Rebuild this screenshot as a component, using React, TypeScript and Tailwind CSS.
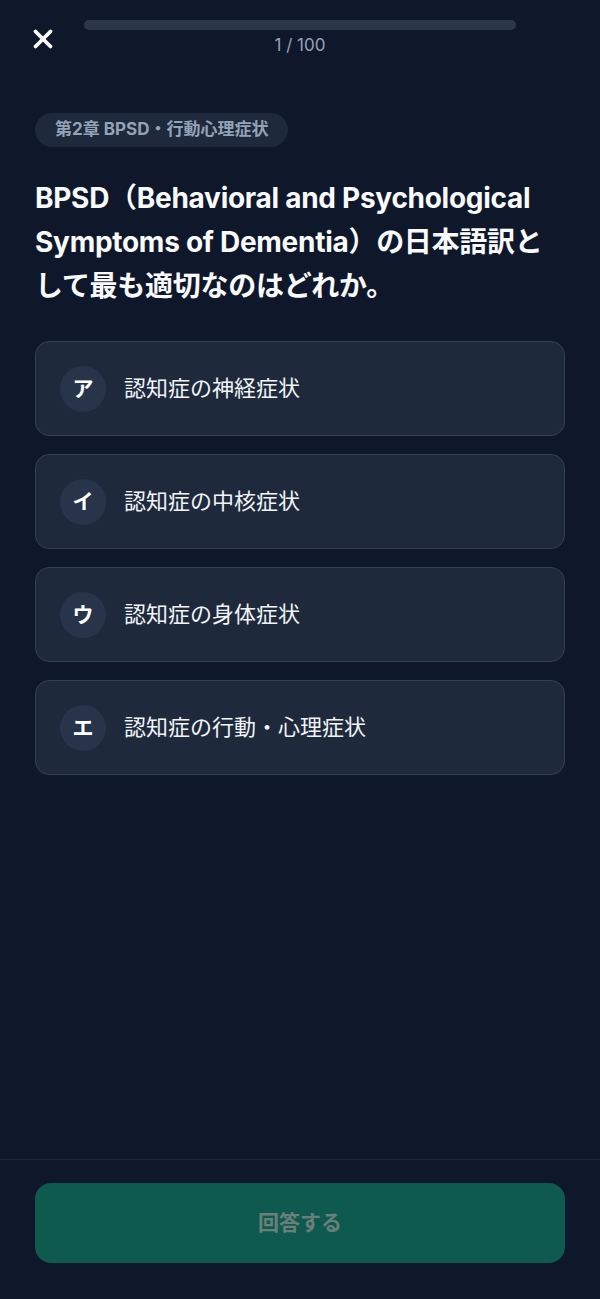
import { X } from "lucide-react";

const choices = [
  { key: "ア", label: "認知症の神経症状" },
  { key: "イ", label: "認知症の中核症状" },
  { key: "ウ", label: "認知症の身体症状" },
  { key: "エ", label: "認知症の行動・心理症状" },
];

const font = { fontFamily: '"Inter", "Noto Sans CJK JP", sans-serif' };

export default function App() {
  return (
    <div className="flex min-h-[1299px] flex-col bg-[#0f172a] text-white" style={font}>
      {/* header */}
      <header className="flex items-start px-[28px] pt-[20px]">
        <button className="flex w-[56px] shrink-0 pt-[4px] text-white">
          <X size={30} strokeWidth={3} />
        </button>
        <div className="flex flex-1 flex-col items-center">
          <div className="h-[10px] w-full rounded-full bg-[#2b3648]" />
          <span className="mt-[5px] text-[17px] leading-5 text-[#94a3b8]">1 / 100</span>
        </div>
        <div className="w-[56px] shrink-0" />
      </header>

      <main className="flex-1 px-[35px] pt-[58px]">
        <span className="inline-flex h-[34px] items-center rounded-full bg-[#1e293b] px-[20px] text-[17px] font-bold text-[#94a3b8]">
          第2章 BPSD・行動心理症状
        </span>

        <h1 className="mt-[29px] text-[28px] font-bold leading-[44px] tracking-[-0.01em] text-[#f8fafc]">
          BPSD（Behavioral and Psychological Symptoms of Dementia）の日本語訳として最も適切なのはどれか。
        </h1>

        <ul className="mt-[33px] flex flex-col gap-[18px]">
          {choices.map((c) => (
            <li
              key={c.key}
              className="flex h-[95px] items-center gap-[18px] rounded-[14px] border border-[#334155] bg-[#1e293b] pl-[24px]"
            >
              <span className="flex h-[46px] w-[46px] items-center justify-center rounded-full bg-[#273449] text-[21px] font-bold text-white">
                {c.key}
              </span>
              <span className="text-[22px] text-[#f1f5f9]">{c.label}</span>
            </li>
          ))}
        </ul>
      </main>

      <footer className="border-t border-[#1e293b] px-[35px] pb-[36px] pt-[23px]">
        <button className="flex h-[80px] w-full items-center justify-center rounded-[16px] bg-[#0f5a4e] text-[21px] font-bold text-[#6b7f7a]">
          回答する
        </button>
      </footer>
    </div>
  );
}
